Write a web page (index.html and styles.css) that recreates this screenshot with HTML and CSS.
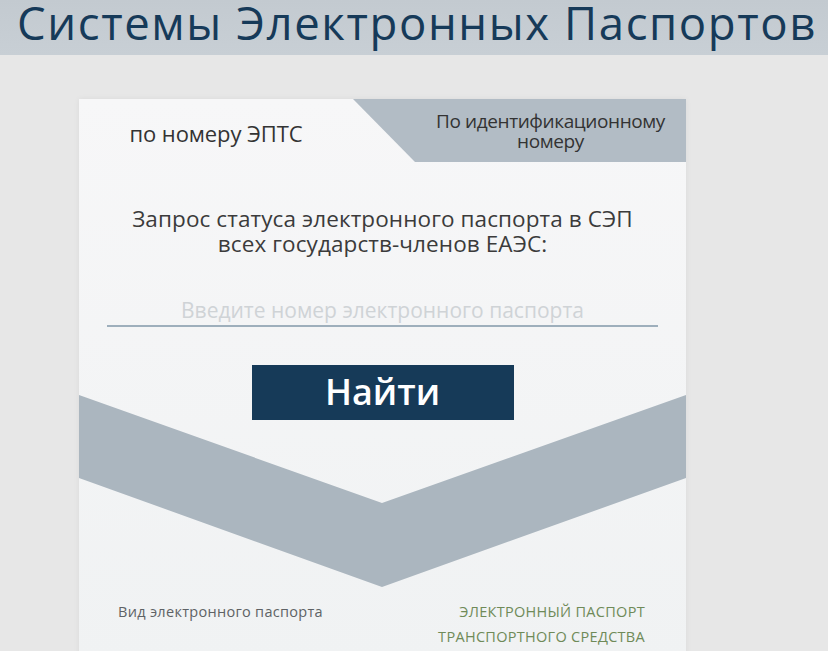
FILE: index.html
```html
<!DOCTYPE html>
<html lang="ru">
<head>
<meta charset="utf-8">
<title>Системы Электронных Паспортов</title>
<link rel="stylesheet" href="styles.css">
</head>
<body>
<header class="topbar">
  <h1 class="title">Системы Электронных Паспортов</h1>
</header>
<main class="page">
  <section class="card">
    <svg class="chevron" viewBox="0 0 607 192" preserveAspectRatio="none" aria-hidden="true">
      <polygon points="0,0 303,108 607,0 607,83 303,192 0,83" fill="#abb6bf"/>
    </svg>
    <div class="tabs">
      <div class="tab tab-active">по номеру ЭПТС</div>
      <div class="tab tab-other"><span>По идентификационному<br>номеру</span></div>
    </div>
    <div class="body">
      <p class="lead">Запрос статуса электронного паспорта в СЭП<br>всех государств-членов ЕАЭС:</p>
      <input class="field" type="text" placeholder="Введите номер электронного паспорта">
      <button class="btn" type="button">Найти</button>
      <div class="spacer"></div>
      <div class="meta">
        <div class="meta-label">Вид электронного паспорта</div>
        <div class="meta-value">ЭЛЕКТРОННЫЙ ПАСПОРТ<br>ТРАНСПОРТНОГО СРЕДСТВА</div>
      </div>
    </div>
  </section>
</main>
</body>
</html>
```
FILE: styles.css
```css
* { box-sizing: border-box; }
html, body { margin: 0; padding: 0; }
body {
  background: #e7e7e7;
  font-family: "Open Sans", "Noto Sans", sans-serif;
  width: 828px;
  height: 651px;
  overflow: hidden;
}
.topbar {
  height: 55px;
  background: linear-gradient(#c3cad0, #c8cfd5);
  padding: 0 0 0 17px;
}
.title {
  margin: 0;
  font-weight: 400;
  font-size: 45.5px;
  line-height: 44px;
  color: #163a59;
  letter-spacing: 1.6px;
  white-space: nowrap;
}
.page {
  padding: 44px 0 0 79px;
}
.card {
  position: relative;
  width: 607px;
  height: 560px;
  background: linear-gradient(#f7f7f8, #f0f2f3);
  box-shadow: 0 0 6px rgba(0,0,0,0.06);
}
.chevron {
  position: absolute;
  left: 0;
  top: 296px;
  width: 607px;
  height: 192px;
  z-index: 0;
}
.tabs {
  position: relative;
  z-index: 1;
  display: flex;
  height: 63px;
}
.tab {
  display: flex;
  align-items: center;
  justify-content: center;
  color: #333;
  text-align: center;
}
.tab-active {
  width: 274px;
  font-size: 22px;
  letter-spacing: -0.1px;
  padding-top: 4px;
}
.tab-other {
  flex: 1;
  background: #b2bcc5;
  clip-path: polygon(0 0, 100% 0, 100% 100%, 62px 100%);
  padding-left: 62px;
  font-size: 19px;
  letter-spacing: -0.4px;
  line-height: 20px;
  padding-bottom: 0;
}
.body {
  position: relative;
  z-index: 1;
  display: flex;
  flex-direction: column;
  align-items: center;
  padding: 0 28px;
}
.lead {
  margin: 44px 0 0;
  font-size: 22.5px;
  line-height: 25px;
  letter-spacing: 0.1px;
  color: #3b3b3b;
  text-align: center;
}
.field {
  margin-top: 36px;
  width: 551px;
  height: 35px;
  border: 0;
  border-bottom: 2px solid #9eafbc;
  background: transparent;
  font-family: inherit;
  font-size: 21px;
  text-align: center;
  padding: 3px 0 0;
  color: #333;
}
.field::placeholder { color: #cfd3d6; }
.btn {
  margin-top: 38px;
  width: 262px;
  height: 55px;
  border: 0;
  background: #163a58;
  color: #fff;
  font-family: inherit;
  font-size: 36px;
  font-weight: 600;
  padding: 0 0 3px;
}
.spacer { height: 179px; }
.meta {
  align-self: stretch;
  display: flex;
  justify-content: space-between;
  padding: 0 13px 0 11px;
  font-size: 14.5px;
  line-height: 25px;
}
.meta-label { color: #5e6265; letter-spacing: 0.3px; }
.meta-value {
  text-align: right;
  color: #6f8a58;
  letter-spacing: 0.3px;
}
```
